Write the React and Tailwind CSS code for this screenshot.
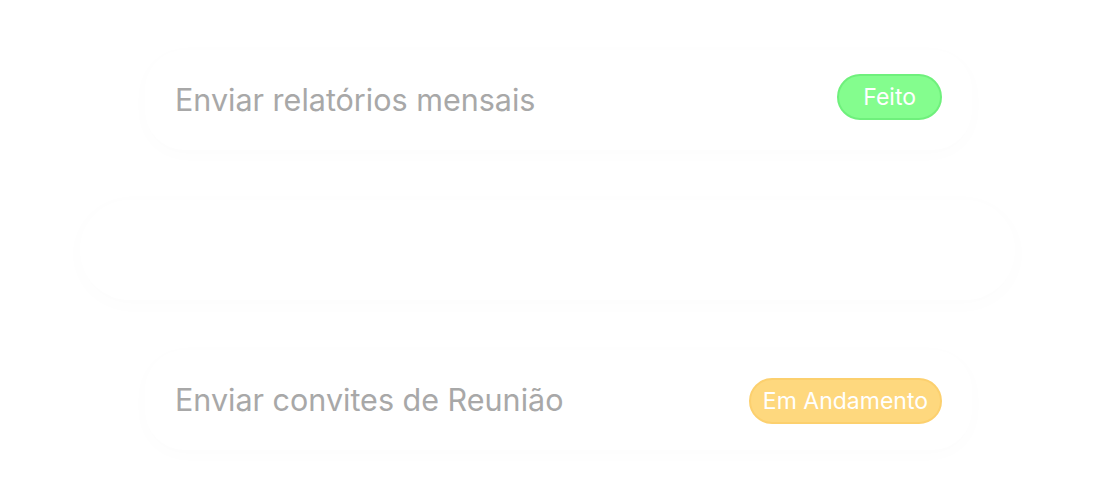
export default function App() {
  const font = { fontFamily: "Inter, 'Noto Sans', sans-serif" };
  return (
    <div className="w-[1096px] h-[500px] bg-white overflow-hidden relative" style={font}>
      <div className="absolute top-0 left-0 right-0 flex justify-between px-[72px] pt-[6px] text-[20px] text-white">
        <span>Nome da Tarefa</span>
        <span>Status Tarefa</span>
      </div>
      <div className="flex flex-col gap-[50px] pt-[50px]">
        <div className="ml-[145px] w-[827px] h-[100px] flex items-center justify-between pl-[30px] pr-[30px] rounded-[40px] shadow-[0_4px_20px_rgba(0,0,0,0.015)]">
          <span className="text-[30.5px] text-[#a8a8a8]">Enviar relatórios mensais</span>
          <span className="h-[46px] px-[24px] mb-[6px] flex items-center rounded-full bg-[#84fd8e] border-2 border-[#6ff07c] text-white text-[23px]">Feito</span>
        </div>
        <div className="ml-[80px] w-[935px] h-[100px] flex items-center justify-between pl-[35px] pr-[35px] rounded-[50px] shadow-[0_4px_24px_rgba(0,0,0,0.015)]">
          <span className="text-[32px] text-white font-medium">Enviar E-Mail para Equipe LEADS</span>
          <span className="h-[50px] px-[26px] flex items-center rounded-full bg-white text-white text-[24px]">Feito</span>
        </div>
        <div className="ml-[145px] w-[827px] h-[100px] flex items-center justify-between pl-[30px] pr-[30px] rounded-[40px] shadow-[0_4px_20px_rgba(0,0,0,0.015)]">
          <span className="text-[30.5px] text-[#a8a8a8]">Enviar convites de Reunião</span>
          <span className="h-[46px] px-[12px] mb-[-2px] flex items-center rounded-full bg-[#fed87e] border-2 border-[#fcd06e] text-white text-[23px]">Em Andamento</span>
        </div>
      </div>
    </div>
  );
}
